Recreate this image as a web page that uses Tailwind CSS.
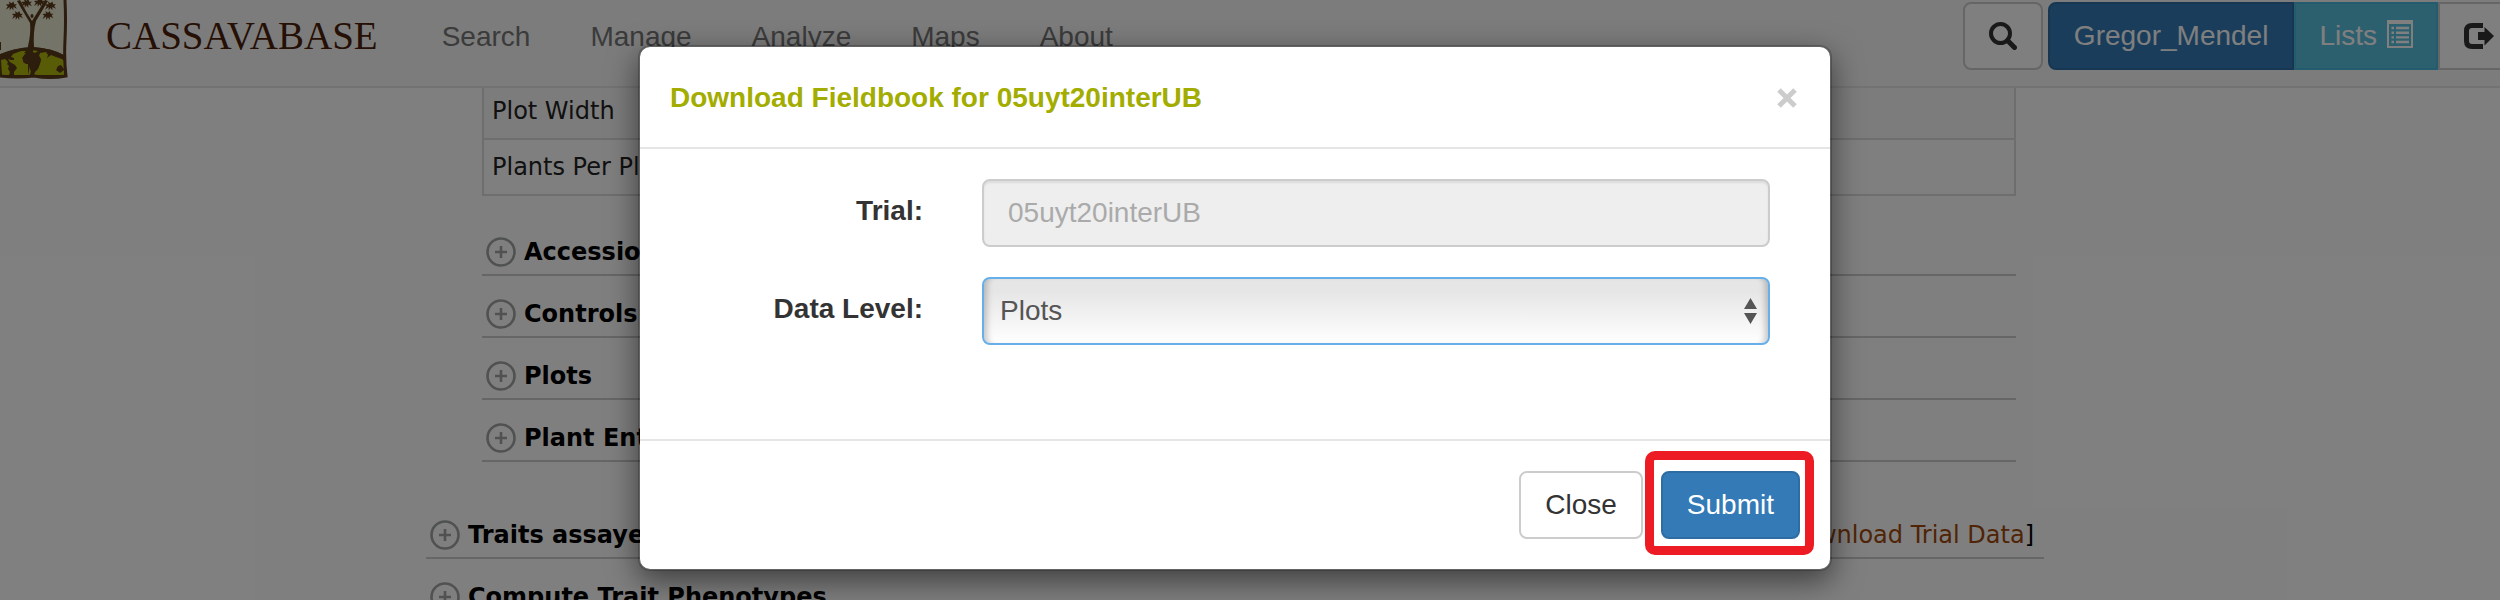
<!DOCTYPE html>
<html lang="en">
<head>
<meta charset="utf-8">
<title>Cassavabase</title>
<script src="https://cdn.jsdelivr.net/npm/@tailwindcss/browser@4"></script>
</head>
<body class="relative h-screen overflow-hidden bg-white font-['Liberation_Sans',Arial,sans-serif] text-[28px] leading-[40px] text-[#333]">

<svg class="hidden" aria-hidden="true">
  <symbol id="plus" viewBox="0 0 30 30"><circle cx="15" cy="15" r="13.5" fill="none" stroke="#a0a2a2" stroke-width="2.6"/><path d="M15 9v12M9 15h12" stroke="#a0a2a2" stroke-width="2.6"/></symbol>
  <symbol id="leaf" viewBox="0 0 12 10"><path d="M1 3L4 3L3 0L6 2L8 0L9 3L12 3L10 5L12 8L8 6L8 10L6 7L4 10L4 6L0 9L2 5L0 4Z" fill="#5a3a1a"/></symbol>
</svg>

<nav class="relative z-10 flex h-[88px] items-start border-b-2 border-[#e7e7e7] bg-[#f8f8f8]">
  <a href="#" class="flex items-start" aria-label="Cassavabase home">
    <svg class="h-[80px] w-[70px] shrink-0" viewBox="0 0 70 80">
      <path d="M0 0H65V77H0Z" fill="#e8e8d2"/>
      <path d="M0 55Q14 48 32 47Q52 48 66 56V77H0Z" fill="#5a3a1a"/>
      <path d="M1 60L5 59L8 62L7 64L9 66L8 69L10 72L9 75H2ZM13 54L21 51L26 51L24 53L27 54L24 57L23 62L26 64L29 64L31 71L30 75H14L14 72L17 68L15 65L10 62L8 59L11 60L14 60L14 58L11 57ZM34 75L35 72L38 69L40 64L41 60L39 56L40 53L46 52L48 55L47 58L51 55L56 57L62 59L65 62L64 69L61 65L58 66L56 70L60 73L64 70L64 75ZM29 50L32 51L34 50L38 51L35 53L31 52Z" fill="#b2b80c"/>
      <path d="M28 75V46Q31 34 30 23L17 1L20 0L27 13L32 21L37 13L45 0L48 1L36 21Q33 32 34 47Z" fill="#5a3a1a"/>
      <path d="M0 54Q14 48 32 47Q52 48 66 56L65 59Q50 51 32 50Q16 50 0 58Z" fill="#5a3a1a"/>
      <path d="M25 54L30 52L36 53L39 56L41 59L39 64L36 68L34 72L31 72L29 64L24 62L22 58Z" fill="#5a3a1a"/>
      <use href="#leaf" x="6" y="1" width="11" height="10"/>
      <use href="#leaf" x="21" y="-1" width="11" height="9"/>
      <use href="#leaf" x="34" y="-2" width="11" height="9"/>
      <use href="#leaf" x="45" y="1" width="11" height="10"/>
      <use href="#leaf" x="12" y="11" width="11" height="9"/>
      <use href="#leaf" x="42" y="11" width="12" height="9"/>
      <ellipse cx="32" cy="16" rx="1.5" ry="2" fill="#5a3a1a"/>
      <path d="M65 0Q66 20 65 40T66 76Q50 79 34 76Q18 78 0 76" fill="none" stroke="#5a3a1a" stroke-width="3"/>
      <path d="M0 42v8" stroke="#5a3a1a" stroke-width="2"/>
    </svg>
    <span class="ml-9 mt-4 font-['Liberation_Serif',serif] text-[39px] leading-[40px] text-[#4c2108]">CASSAVABASE</span>
  </a>
  <div class="ml-[34px] mt-[17px] flex text-[#777]">
    <a href="#" class="px-[30px]">Search</a>
    <a href="#" class="px-[30px]">Manage</a>
    <a href="#" class="px-[30px]">Analyze</a>
    <a href="#" class="px-[30px]">Maps</a>
    <a href="#" class="px-[30px]">About</a>
  </div>
  <div class="-mr-5 ml-auto mt-0.5 flex shrink-0">
    <button type="button" aria-label="Search" class="mr-[5px] h-[68px] rounded-lg border-2 border-[#ccc] bg-white px-6">
      <svg class="size-7" viewBox="0 0 28 28"><circle cx="11.500" cy="11.500" r="9.500" fill="none" stroke="#333" stroke-width="4"/><path d="M18.500 18.500L25.500 25.500" stroke="#333" stroke-width="5" stroke-linecap="round"/></svg>
    </button>
    <button type="button" class="h-[68px] rounded-l-lg border-2 border-[#2e6da4] bg-[#337ab7] px-6 text-white">Gregor_Mendel</button>
    <button type="button" class="flex h-[68px] items-center gap-2.5 border-2 border-[#46b8da] bg-[#5bc0de] px-[23px] text-white">Lists
      <svg class="-mt-1 h-7 w-[26px]" viewBox="0 0 26 28"><path fill="#fff" fill-rule="evenodd" d="M0 0H26V28H0ZM2 4V26H24V4Z"/><path d="M9 8h13M9 12.700h13M9 17.400h13M9 22h13M4.500 8h2.500M4.500 12.700h2.500M4.500 17.400h2.500M4.500 22h2.500" stroke="#fff" stroke-width="2.400"/></svg>
    </button>
    <button type="button" aria-label="Log out" class="h-[68px] rounded-r-lg border-2 border-[#ccc] bg-white px-6">
      <svg class="h-[26px] w-[30px]" viewBox="0 0 30 26"><path d="M19 2.500H8Q2.500 2.500 2.500 8V18Q2.500 23.500 8 23.500H19" fill="none" stroke="#333" stroke-width="5"/><path d="M14 9H20.500V4L30 13L20.500 22.500V17H14Z" fill="#333"/></svg>
    </button>
  </div>
</nav>

<main class="mx-auto -mt-1.5 w-full max-w-[1648px] pr-[30px] font-['DejaVu_Sans',Verdana,sans-serif] text-[24px] text-black">
  <div class="pl-14 pr-7">
    <table class="w-full border-collapse text-[#222]">
      <tbody>
        <tr class="h-14 bg-[#f9f9f9]"><td class="w-1/4 border-2 border-r-0 border-[#ddd] px-2">Plot Width</td><td class="border-2 border-l-0 border-[#ddd]"></td></tr>
        <tr class="h-14"><td class="border-2 border-r-0 border-[#ddd] px-2">Plants Per Plot</td><td class="border-2 border-l-0 border-[#ddd]"></td></tr>
      </tbody>
    </table>
    <div class="mt-[18px] font-bold">
      <div class="flex h-[62px] items-center gap-2 border-b-2 border-[#ccc] pl-1 pt-4"><svg class="size-[30px]"><use href="#plus"/></svg>Accessions</div>
      <div class="flex h-[62px] items-center gap-2 border-b-2 border-[#ccc] pl-1 pt-4"><svg class="size-[30px]"><use href="#plus"/></svg>Controls</div>
      <div class="flex h-[62px] items-center gap-2 border-b-2 border-[#ccc] pl-1 pt-4"><svg class="size-[30px]"><use href="#plus"/></svg>Plots</div>
      <div class="flex h-[62px] items-center gap-2 border-b-2 border-[#ccc] pl-1 pt-4"><svg class="size-[30px]"><use href="#plus"/></svg>Plant Entries</div>
    </div>
  </div>
  <div class="mt-[35px] font-bold">
    <div class="flex h-[62px] items-center gap-2 border-b-2 border-[#ccc] pl-1 pt-4 pr-2.5"><svg class="size-[30px]"><use href="#plus"/></svg>Traits assayed
      <span class="ml-auto font-normal">[<a href="#" class="text-[#a1480c]">Download Trial Data</a>]</span></div>
    <div class="flex h-[62px] items-center gap-2 border-b-2 border-[#ccc] pl-1 pt-4"><svg class="size-[30px]"><use href="#plus"/></svg>Compute Trait Phenotypes</div>
  </div>
</main>

<div class="absolute inset-0 z-20 bg-black/50 pr-[30px] pt-[45px]">
  <form role="dialog" aria-labelledby="dialog-title" class="mx-auto w-full max-w-[1194px] rounded-xl border-2 border-black/20 bg-white bg-clip-padding shadow-[0_10px_30px_rgba(0,0,0,0.5)]">
    <div class="flex items-center justify-between border-b-2 border-[#e5e5e5] px-[30px] pb-[29px] pt-[31px]">
      <h4 id="dialog-title" class="font-bold text-[#a2ad00]">Download Fieldbook for 05uyt20interUB</h4>
      <button type="button" aria-label="Close dialog" class="px-[3px]">
        <svg class="size-5" viewBox="0 0 20 20"><path d="M2 2L18 18M18 2L2 18" stroke="#ccc" stroke-width="5"/></svg>
      </button>
    </div>
    <div class="grid grid-cols-[283px_1fr] gap-x-[59px] gap-y-[30px] pb-[94px] pr-[60px] pt-[30px]">
      <label for="trial" class="pt-3 text-right font-bold">Trial:</label>
      <input id="trial" type="text" disabled value="05uyt20interUB" class="h-[68px] w-full rounded-lg border-2 border-[#ccc] bg-[#eee] px-6 text-[#aaa] shadow-[inset_0_2px_2px_rgba(0,0,0,0.075)]">
      <label for="level" class="pt-3 text-right font-bold">Data Level:</label>
      <div class="relative">
        <select id="level" class="h-[68px] w-full appearance-none rounded-lg border-2 border-[#66afe9] bg-linear-to-b from-[#e6e6e6] from-20% to-white px-4 text-[#555] shadow-[inset_8px_0_6px_-5px_rgba(0,0,0,0.22),inset_-8px_0_6px_-5px_rgba(0,0,0,0.22)]"><option>Plots</option></select>
        <svg class="pointer-events-none absolute right-[13px] top-[21px] h-[26px] w-[13px]" viewBox="0 0 13 26"><path d="M6.500 0L13 11H0ZM0 15H13L6.500 26Z" fill="#555"/></svg>
      </div>
    </div>
    <div class="flex justify-end gap-[18px] border-t-2 border-[#e5e5e5] p-[30px]">
      <button type="button" class="h-[68px] rounded-lg border-2 border-[#ccc] bg-white px-6">Close</button>
      <div class="relative">
        <button type="submit" class="h-[68px] rounded-lg border-2 border-[#2e6da4] bg-[#337ab7] px-6 text-white">Submit</button>
        <span class="pointer-events-none absolute -bottom-4 -left-4 -right-3.5 -top-5 rounded-[10px] border-[9px] border-[#ed1c24]"></span>
      </div>
    </div>
  </form>
</div>
</body>
</html>
